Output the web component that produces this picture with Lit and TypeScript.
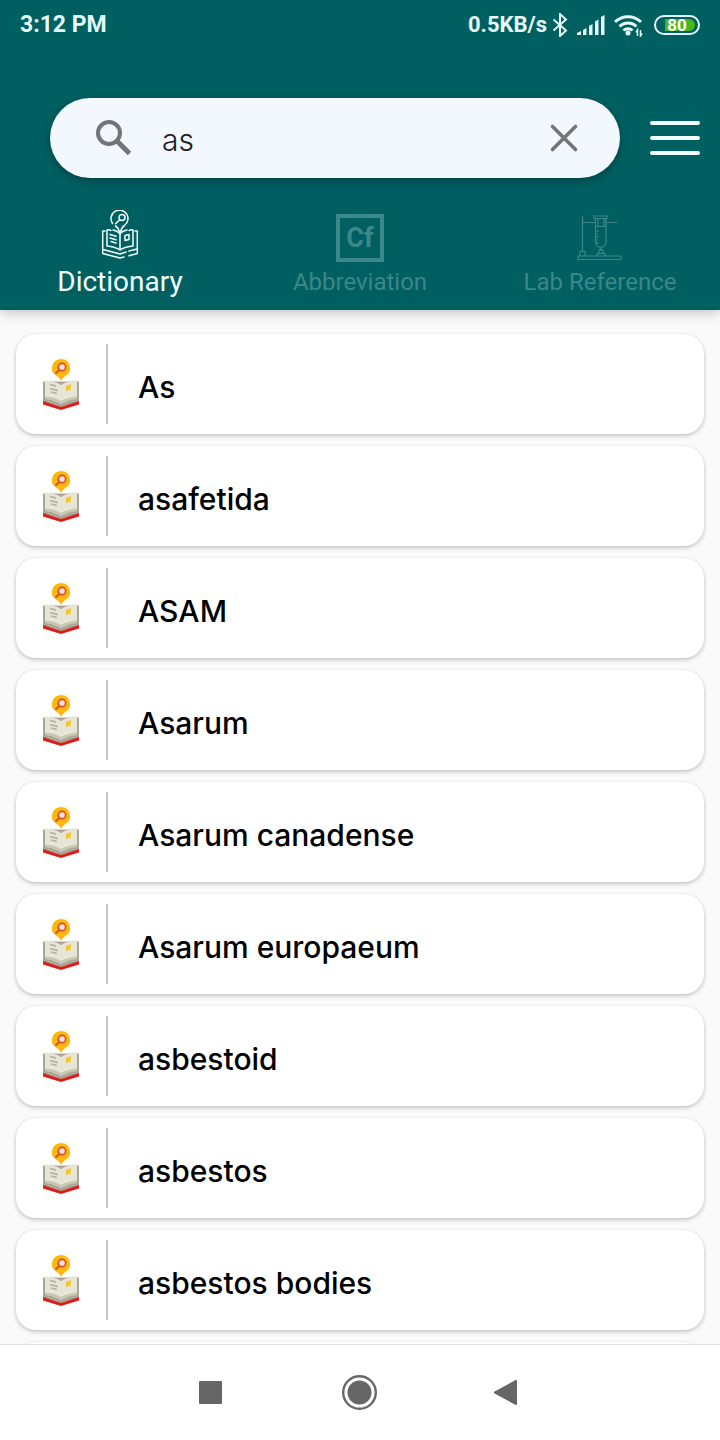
import { LitElement, html, svg, css } from "lit";
import { customElement, property, state } from "lit/decorators.js";
import { classMap } from "lit/directives/class-map.js";

@customElement("status-bar")
class StatusBar extends LitElement {
  static styles = css`
    :host {
      display: flex;
      align-items: center;
      justify-content: space-between;
      height: 50px;
      padding: 0 20px;
      color: #e4fafb;
      font: 700 23px/28px Roboto, sans-serif;
    }
    .right {
      display: flex;
      align-items: center;
      font-size: 22px;
    }
    svg {
      display: block;
    }
    .bluetooth { margin-left: 5px; }
    .signal { margin-left: 9px; }
    .wifi { margin-left: 9px; }
    .battery {
      box-sizing: border-box;
      display: flex;
      width: 46px;
      height: 20px;
      margin-left: 10px;
      padding: 2px 3px;
      border: 2px solid #e4fafb;
      border-radius: 10px;
    }
    .level {
      flex: 1;
      border-radius: 6px;
      background: linear-gradient(90deg, #005f61 6px, #46b81c 6px);
      color: #fff;
      font-size: 17px;
      line-height: 12px;
      text-align: center;
    }
  `;
  render() {
    return html`
      <span>3:12 PM</span>
      <div class="right">
        <span>0.5KB/s</span>
        <svg class="bluetooth" width="16" height="24" viewBox="0 0 16 24" fill="none" stroke="currentColor" stroke-width="2">
          <path d="M1.500 6.500 14 17.500 8 23V1l6 5.500L1.500 17.500" />
        </svg>
        <svg class="signal" width="28" height="20" viewBox="0 0 28 20" fill="currentColor">
          <path d="M0 18l4-2v4H0zM6 15l3.500-2v7H6zM12 11l3.500-2v11H12zM18 6.500l3.500-2V20H18zM24 2l3.500-2v20H24z" />
        </svg>
        <svg class="wifi" width="30" height="23" viewBox="0 0 30 23" fill="none" stroke="currentColor" stroke-width="3">
          <path d="M1 8a18.500 18.500 0 0 1 26 0M5.500 12.500a12 12 0 0 1 17 0M9.500 16.500a6.500 6.500 0 0 1 9 0" />
          <circle cx="14" cy="19" r="2.500" fill="currentColor" stroke="none" />
          <path d="M23.500 22v-6l-1.500 2.500M26.500 16v6l1.500-2.500" stroke-width="1.500" />
        </svg>
        <div class="battery"><span class="level">80</span></div>
      </div>
    `;
  }
}

const dictionaryIcon = svg`
  <svg width="48" height="50" viewBox="0 0 48 50" fill="none" stroke="currentColor" stroke-width="1.500" stroke-linejoin="round" stroke-linecap="round">
    <path d="M16.500 13.500A8.500 8.500 0 1 1 28.500 15.500C26 17 25 19 24 24 23 19 22 17.500 19.500 16" />
    <circle cx="26" cy="7.500" r="3" />
    <path d="m23.700 9.800-4.200 4" />
    <path d="M15 20.500c-2-.8-3-.8-4-.5v16c5 .3 9 1.500 13 4 4-2.500 8-3.700 13-4V20c-1-.3-2-.3-4 .5M17 20c3 .5 5 1.500 7 3.500 2-2 4-3 7-3.500M24 24v16" />
    <path d="M9 21H6.700v22.500L24 48l4-1M39 21h2.300v22.500L33 45.700M7 39.500l17 4.500 6-2M33 41l8-2" />
    <path d="m14 24.500 6 1.700M14 28l6 1.700M15 31.500l5 1.500M29 25.500l4-1v5l-4 1z" />
  </svg>`;

const labIcon = svg`
  <svg width="48" height="50" viewBox="0 0 48 50" fill="none" stroke="currentColor" stroke-width="1.200">
    <path d="M2 44h43v3.500H2zM4 44v-4.500h5V44M6.500 39.500V4M6.500 10.500h12M30 10.500h11" />
    <path d="M18 4h13v2.500H18zM19.500 6.500V30c0 7 10.500 7 10.500 0V6.500M19.500 14.500H30M22 7v7M28 7v7" />
    <path d="M20 19h3M20 22h2M20 25h3M20 28h2M20 31h3M24.500 35v4M23.500 37.500l-1 4h5l-1-4zM21 44v-2.500h8V44" />
  </svg>`;

const bookIcon = svg`
  <svg width="38" height="52" viewBox="0 0 38 52">
    <path d="M1 43h36v3.500L19 52 1 46.500z" fill="#d9201d" />
    <path d="M1 23.500h36V43l-18 6L1 43z" fill="#aaa895" />
    <path d="M3 22c6 1 11 2 16 5 5-3 10-4 16-5v19c-6 .6-11 2-16 5-5-3-10-4.400-16-5z" fill="#e7e5d5" />
    <path d="M3 38.500c6 .4 11 1.800 16 4.500 5-2.700 10-4.100 16-4.500V41c-6 .6-11 2-16 5-5-3-10-4.400-16-5z" fill="#c7c5b1" />
    <path d="m8 26.500 6 1.500m-6 2.500 8 2m-7 1.500 6 1.500" fill="none" stroke="#b3b09d" stroke-width="1.400" />
    <path d="m24 28 5-2v5l-5 2z" fill="#f3c52f" />
    <path d="M19 1a9 9 0 0 1 4.500 16.800C21 19.300 20 21 19 23c-1-2-2-3.700-4.500-5.200A9 9 0 0 1 19 1z" fill="#fbb90d" />
    <path d="m18 11.500-4.500 4" stroke="#dd4b26" stroke-width="2" />
    <circle cx="20" cy="9" r="3.700" fill="#f5dfdc" stroke="#dd4b26" stroke-width="1.700" />
  </svg>`;

@customElement("word-card")
class WordCard extends LitElement {
  @property() word = "";
  static styles = css`
    :host { display: block; }
    .card {
      box-sizing: border-box;
      display: flex;
      align-items: center;
      width: 100%;
      height: 100px;
      padding: 10px 30px 10px 26px;
      border: 0;
      border-radius: 20px;
      background: #fff;
      box-shadow: 0 2px 4px rgba(0, 0, 0, 0.2), 0 0 2px rgba(0, 0, 0, 0.1);
      color: #000;
      font: 500 30px/40px Inter, sans-serif;
      text-align: left;
    }
    .divider {
      align-self: stretch;
      width: 2px;
      margin: 0 30px 0 26px;
      background: #c4c4c4;
    }
    .word { padding-top: 6px; }
  `;
  render() {
    return html`
      <button class="card" type="button">
        ${bookIcon}
        <span class="divider"></span>
        <span class="word">${this.word}</span>
      </button>
    `;
  }
}

@customElement("app-root")
class AppRoot extends LitElement {
  @state() private query = "as";
  @state() private tab = "Dictionary";

  private words = [
    "As", "asafetida", "ASAM", "Asarum", "Asarum canadense",
    "Asarum europaeum", "asbestoid", "asbestos", "asbestos bodies", "",
  ];

  private tabs = [
    { name: "Dictionary", icon: dictionaryIcon },
    { name: "Abbreviation", icon: html`<span class="symbol">Cf</span>` },
    { name: "Lab Reference", icon: labIcon },
  ];

  static styles = css`
    :host {
      display: flex;
      flex-direction: column;
      height: 100vh;
      background: #fafafa;
      font-family: Roboto, sans-serif;
    }
    svg { display: block; }
    button {
      border: 0;
      padding: 0;
      background: none;
      color: inherit;
      font-family: inherit;
    }
    .header {
      z-index: 1;
      flex: none;
      background: #005f61;
      color: #f2ffff;
      box-shadow: 0 2px 12px rgba(0, 0, 0, 0.24);
    }
    .tools {
      display: flex;
      align-items: center;
      gap: 30px;
      padding: 48px 20px 20px 50px;
    }
    .search {
      flex: 1;
      min-width: 0;
      box-sizing: border-box;
      display: flex;
      align-items: center;
      height: 80px;
      padding: 0 40px 0 44px;
      border-radius: 40px;
      background: #f3f7fe;
      color: #737478;
      box-shadow: 0 3px 8px rgba(0, 0, 0, 0.3);
    }
    .query {
      flex: 1;
      min-width: 0;
      margin: 0 16px 0 28px;
      padding: 4px 0 0;
      border: 0;
      outline: 0;
      background: none;
      color: #202124;
      font: 300 30px/40px Inter, sans-serif;
    }
    .tabs {
      display: grid;
      grid-template-columns: repeat(3, 1fr);
      height: 112px;
    }
    .tab {
      display: flex;
      flex-direction: column;
      align-items: center;
      justify-content: flex-end;
      gap: 4px;
      padding-bottom: 12px;
      color: #3c8789;
      font-size: 24px;
      line-height: 32px;
    }
    .active {
      gap: 6px;
      color: #f2ffff;
      font-size: 28px;
    }
    .symbol {
      box-sizing: border-box;
      width: 48px;
      height: 48px;
      border: 4px solid;
      font-size: 27px;
      font-weight: 700;
      line-height: 40px;
      text-align: center;
    }
    .list {
      flex: 1;
      min-height: 0;
      overflow: hidden;
      display: flex;
      flex-direction: column;
      gap: 12px;
      margin: 0;
      padding: 24px 16px 0;
      list-style: none;
    }
    .item { flex: none; }
    .nav {
      z-index: 1;
      flex: none;
      box-sizing: border-box;
      display: flex;
      align-items: center;
      justify-content: center;
      gap: 114px;
      height: 96px;
      border-top: 1px solid #e2e2e2;
      background: #fff;
      color: #666;
    }
  `;

  render() {
    return html`
      <header class="header">
        <status-bar></status-bar>
        <div class="tools">
          <div class="search">
            <svg width="40" height="40" viewBox="0 0 40 40" fill="none" stroke="currentColor" stroke-width="4">
              <circle cx="15" cy="15" r="11" />
              <path d="m23 23 12.500 12.500" stroke-width="5" />
            </svg>
            <input class="query" type="text" aria-label="Search" .value=${this.query}
              @input=${(e: Event) => (this.query = (e.target as HTMLInputElement).value)} />
            <button type="button" aria-label="Clear" @click=${() => (this.query = "")}>
              <svg width="32" height="32" viewBox="0 0 32 32" stroke="currentColor" stroke-width="3.600" stroke-linecap="round">
                <path d="m4.500 4.500 23 23M27.500 4.500l-23 23" />
              </svg>
            </button>
          </div>
          <button type="button" aria-label="Menu">
            <svg width="50" height="36" viewBox="0 0 50 36" stroke="currentColor" stroke-width="4" stroke-linecap="round">
              <path d="M2 3h46M2 18h46M2 33h46" />
            </svg>
          </button>
        </div>
        <nav class="tabs">
          ${this.tabs.map((t) => html`
            <button type="button" class=${classMap({ tab: true, active: t.name === this.tab })}
              @click=${() => (this.tab = t.name)}>
              ${t.icon}<span>${t.name}</span>
            </button>`)}
        </nav>
      </header>
      <ul class="list">
        ${this.words.map((w) => html`<li class="item"><word-card .word=${w}></word-card></li>`)}
      </ul>
      <nav class="nav">
        <button type="button" aria-label="Recent apps">
          <svg width="36" height="36" viewBox="0 0 36 36" fill="currentColor"><rect x="7" y="6" width="23" height="23" rx="1" /></svg>
        </button>
        <button type="button" aria-label="Home">
          <svg width="36" height="36" viewBox="0 0 36 36">
            <circle cx="17.500" cy="17.500" r="16.300" fill="none" stroke="currentColor" stroke-width="2.400" />
            <circle cx="17.500" cy="17.500" r="12" fill="currentColor" />
          </svg>
        </button>
        <button type="button" aria-label="Back">
          <svg width="36" height="36" viewBox="0 0 36 36" fill="currentColor" stroke="currentColor" stroke-width="2" stroke-linejoin="round">
            <path d="M3 17.500 24 6v23z" />
          </svg>
        </button>
      </nav>
    `;
  }
}
